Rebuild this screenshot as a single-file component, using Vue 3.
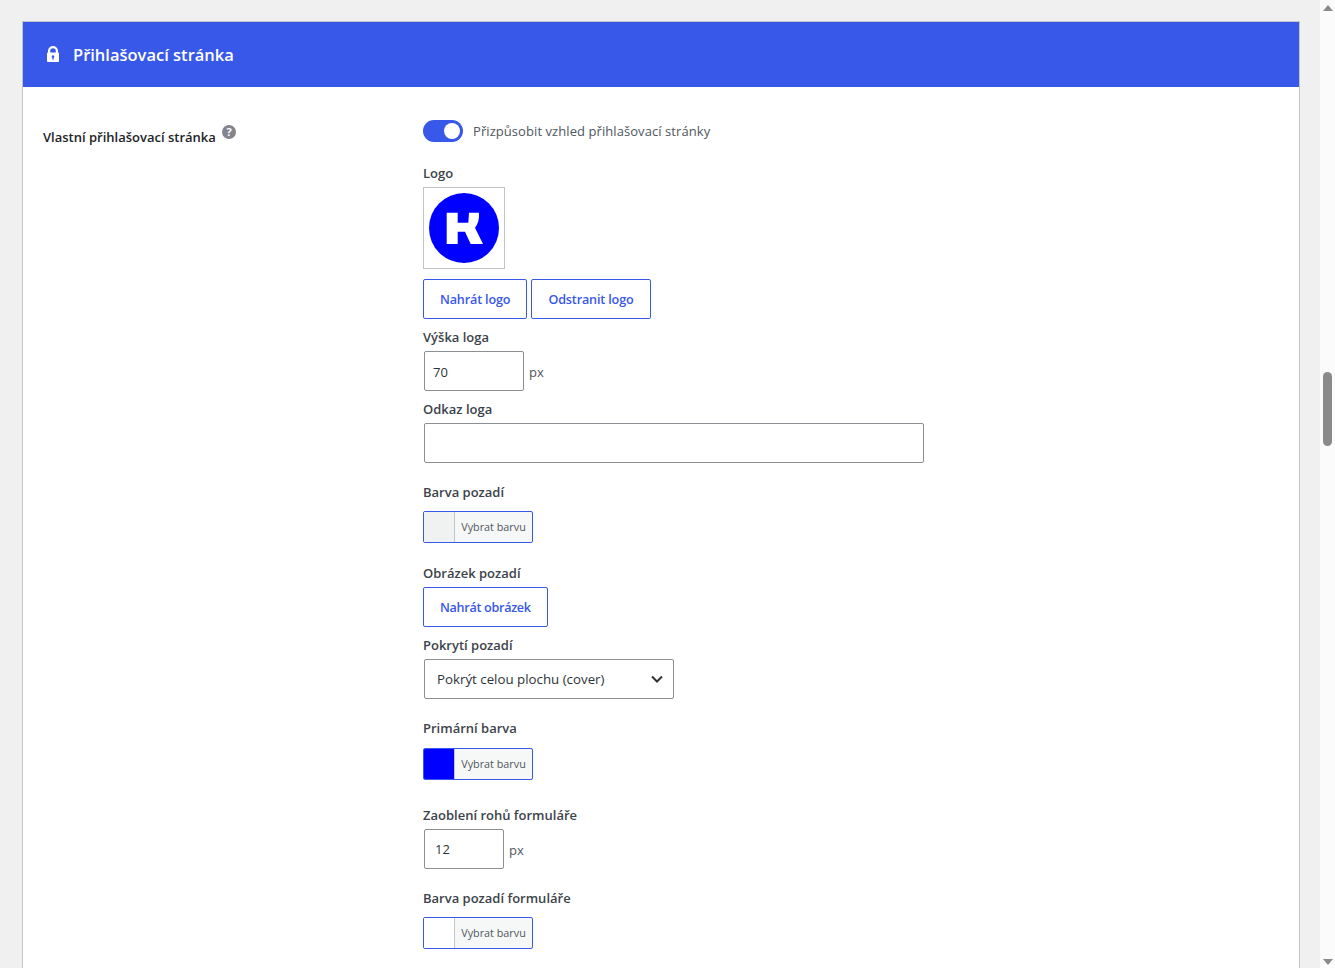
<script setup>
const title = 'Přihlašovací stránka'
</script>

<template>
  <div class="page">
    <main class="content">
      <section class="card">
        <header class="card-head">
          <svg class="lock" viewBox="0 0 12 16" width="12" height="16">
            <path fill="#fff" fill-rule="evenodd" d="M1 6.500V5a5 5 0 0 1 10 0v1.500h.2c.4 0 .8.400.8.800v7.900c0 .4-.4.800-.8.800H.8c-.4 0-.8-.4-.8-.8V7.300c0-.4.400-.8.800-.8H1zM3.200 6.500h5.600V5a2.800 2.800 0 0 0-5.600 0v1.500zM6 9.300a1.300 1.300 0 0 0-.7 2.400V13.500h1.400v-1.800A1.300 1.300 0 0 0 6 9.300z" />
          </svg>
          <h1>{{ title }}</h1>
        </header>

        <div class="card-body">
          <div class="side">
            <span class="side-label">Vlastní přihlašovací stránka</span>
            <svg class="help" viewBox="0 0 14 14" width="14" height="14">
              <circle cx="7" cy="7" r="7" fill="#82858c" />
              <text x="7" y="11" text-anchor="middle" class="help-mark">?</text>
            </svg>
          </div>

          <div class="fields">
            <div class="toggle-row">
              <span class="toggle"><span class="knob"></span></span>
              <span class="toggle-text">Přizpůsobit vzhled přihlašovací stránky</span>
            </div>

            <label class="lbl mt21">Logo</label>
            <div class="logo-box">
              <svg viewBox="0 0 70 70" width="70" height="70">
                <circle cx="35" cy="35" r="35" fill="#0000ff" />
                <path fill="#fff" d="M17.700 19.700H28.700V29.700H39.300L40 19.700H50C50.500 26 49 31 46 34.700L54 51H41.700L36 38.700H28.700V51H17.700Z" />
              </svg>
            </div>
            <div class="btn-row">
              <button class="btn">Nahrát logo</button>
              <button class="btn">Odstranit logo</button>
            </div>

            <label class="lbl mt8">Výška loga</label>
            <div class="with-unit">
              <input class="input w-100" type="text" value="70" />
              <span class="unit">px</span>
            </div>

            <label class="lbl mt8">Odkaz loga</label>
            <input class="input w-500" type="text" />

            <label class="lbl mt19">Barva pozadí</label>
            <button class="color-btn mt9">
              <span class="swatch" style="background: #eff2f1"></span>
              <span class="color-text">Vybrat barvu</span>
            </button>

            <label class="lbl mt20">Obrázek pozadí</label>
            <button class="btn single">Nahrát obrázek</button>

            <label class="lbl mt8">Pokrytí pozadí</label>
            <select class="select">
              <option>Pokrýt celou plochu (cover)</option>
            </select>

            <label class="lbl mt19">Primární barva</label>
            <button class="color-btn mt10">
              <span class="swatch" style="background: #0000ff"></span>
              <span class="color-text">Vybrat barvu</span>
            </button>

            <label class="lbl mt25">Zaoblení rohů formuláře</label>
            <div class="with-unit">
              <input class="input w-80 wide-pad" type="text" value="12" />
              <span class="unit">px</span>
            </div>

            <label class="lbl mt19">Barva pozadí formuláře</label>
            <button class="color-btn mt9">
              <span class="swatch" style="background: #ffffff"></span>
              <span class="color-text">Vybrat barvu</span>
            </button>
          </div>
        </div>
      </section>
    </main>

    <aside class="scrollbar">
      <span class="arrow up"></span>
      <span class="track"><span class="thumb"></span></span>
      <span class="arrow down"></span>
    </aside>
  </div>
</template>

<style>
html, body {
  margin: 0;
  overflow: hidden;
}
</style>

<style scoped>
.page {
  display: flex;
  height: 968px;
  overflow: hidden;
  background: #f0f0f1;
  font-family: "Open Sans", "Noto Sans", sans-serif;
  font-size: 13px;
  color: #3c434a;
}
.content {
  flex: 1;
  padding: 21px 20px 0 22px;
  min-width: 0;
}
.card {
  border: 1px solid #c3c4c7;
  background: #fff;
  height: 1200px;
}
.card-head {
  height: 65px;
  background: #3858e9;
  display: flex;
  align-items: center;
  padding-left: 24px;
  gap: 14px;
}
.lock {
  margin-top: -1px;
}
.card-head h1 {
  margin: 0;
  color: #fff;
  font-size: 16.500px;
  font-weight: 600;
  line-height: 24px;
}
.card-body {
  display: flex;
  padding: 33px 0 0 20px;
}
.side {
  width: 380px;
  flex: none;
  display: flex;
  align-items: flex-start;
  gap: 6px;
  padding-top: 5px;
}
.side-label {
  font-size: 13px;
  font-weight: 600;
  line-height: 24px;
  color: #1d2327;
}
.help {
  display: block;
}
.help-mark {
  fill: #fff;
  font-size: 11px;
  font-weight: 700;
}
.fields {
  display: flex;
  flex-direction: column;
  align-items: flex-start;
}
.toggle-row {
  display: flex;
  align-items: center;
  gap: 10px;
  height: 22px;
}
.toggle {
  width: 40px;
  height: 22px;
  border-radius: 11px;
  background: #3858e9;
  display: flex;
  align-items: center;
  justify-content: flex-end;
  padding-right: 3px;
  box-sizing: border-box;
}
.knob {
  width: 16px;
  height: 16px;
  border-radius: 50%;
  background: #fff;
}
.toggle-text {
  color: #50575e;
  letter-spacing: 0.07px;
}
.lbl {
  display: block;
  line-height: 20px;
  font-weight: 600;
  margin-bottom: 4px;
  color: #3c434a;
}
.mt8 { margin-top: 8px; }
.mt19 { margin-top: 19px; }
.mt20 { margin-top: 20px; }
.mt21 { margin-top: 21px; }
.mt25 { margin-top: 25px; }
.mt9 { margin-top: 5px; }
.mt10 { margin-top: 6px; }
.logo-box {
  width: 82px;
  height: 82px;
  box-sizing: border-box;
  border: 1px solid #c3c4c7;
  display: flex;
  align-items: center;
  justify-content: center;
}
.logo-box svg {
  display: block;
}
.btn-row {
  display: flex;
  gap: 4px;
  margin-top: 10px;
}
.btn {
  height: 40px;
  padding: 0 16px;
  background: #fff;
  border: 1px solid #3858e9;
  border-radius: 2px;
  color: #3858e9;
  font-family: inherit;
  font-size: 12.600px;
  font-weight: 600;
  letter-spacing: -0.15px;
}
.btn.single {
  letter-spacing: -0.3px;
}
.with-unit {
  display: flex;
  align-items: center;
  gap: 4px;
}
.unit {
  color: #50575e;
  padding-top: 2px;
}
.input {
  height: 40px;
  box-sizing: border-box;
  margin: 0 1px;
  padding: 0 8px;
  border: 1px solid #8c8f94;
  border-radius: 2px;
  background: #fff;
  color: #2c3338;
  font-family: inherit;
  font-size: 13px;
  outline: none;
}
.w-100 { width: 100px; padding-top: 2px; }
.w-80 { width: 80px; }
.w-500 { width: 500px; }
.wide-pad { padding: 0 10px; }
.color-btn {
  display: flex;
  align-items: stretch;
  width: 110px;
  height: 32px;
  padding: 0;
  background: #f6f7f7;
  border: 1px solid #3858e9;
  border-radius: 2px;
  font-family: inherit;
  overflow: hidden;
}
.swatch {
  width: 30px;
  flex: none;
  border-right: 1px solid #c3c4c7;
}
.color-text {
  flex: 1;
  text-align: center;
  font-size: 10.800px;
  line-height: 30px;
  color: #50575e;
}
.select {
  width: 250px;
  height: 40px;
  margin: 0 1px;
  padding: 0 24px 0 12px;
  box-sizing: border-box;
  appearance: none;
  border: 1px solid #8c8f94;
  border-radius: 2px;
  color: #2c3338;
  font-family: inherit;
  font-size: 13.300px;
  background: #fff url("data:image/svg+xml,%3Csvg xmlns='http://www.w3.org/2000/svg' width='12' height='8' viewBox='0 0 12 8'%3E%3Cpath d='M1 1.500l5 5 5-5' fill='none' stroke='%232c3338' stroke-width='2'/%3E%3C/svg%3E") no-repeat right 10px center;
}
.scrollbar {
  width: 15px;
  flex: none;
  background: #fbfbfb;
  display: flex;
  flex-direction: column;
  align-items: center;
}
.arrow {
  width: 0;
  height: 0;
  flex: none;
  border-left: 5px solid transparent;
  border-right: 5px solid transparent;
}
.arrow.up {
  margin-top: 5px;
  border-bottom: 6px solid #8a8a8a;
}
.arrow.down {
  margin-bottom: 3px;
  border-top: 6px solid #8a8a8a;
}
.track {
  flex: 1;
  display: block;
}
.thumb {
  display: block;
  width: 9px;
  height: 74px;
  margin-top: 361px;
  border-radius: 5px;
  background: #8a8a8a;
}
</style>
